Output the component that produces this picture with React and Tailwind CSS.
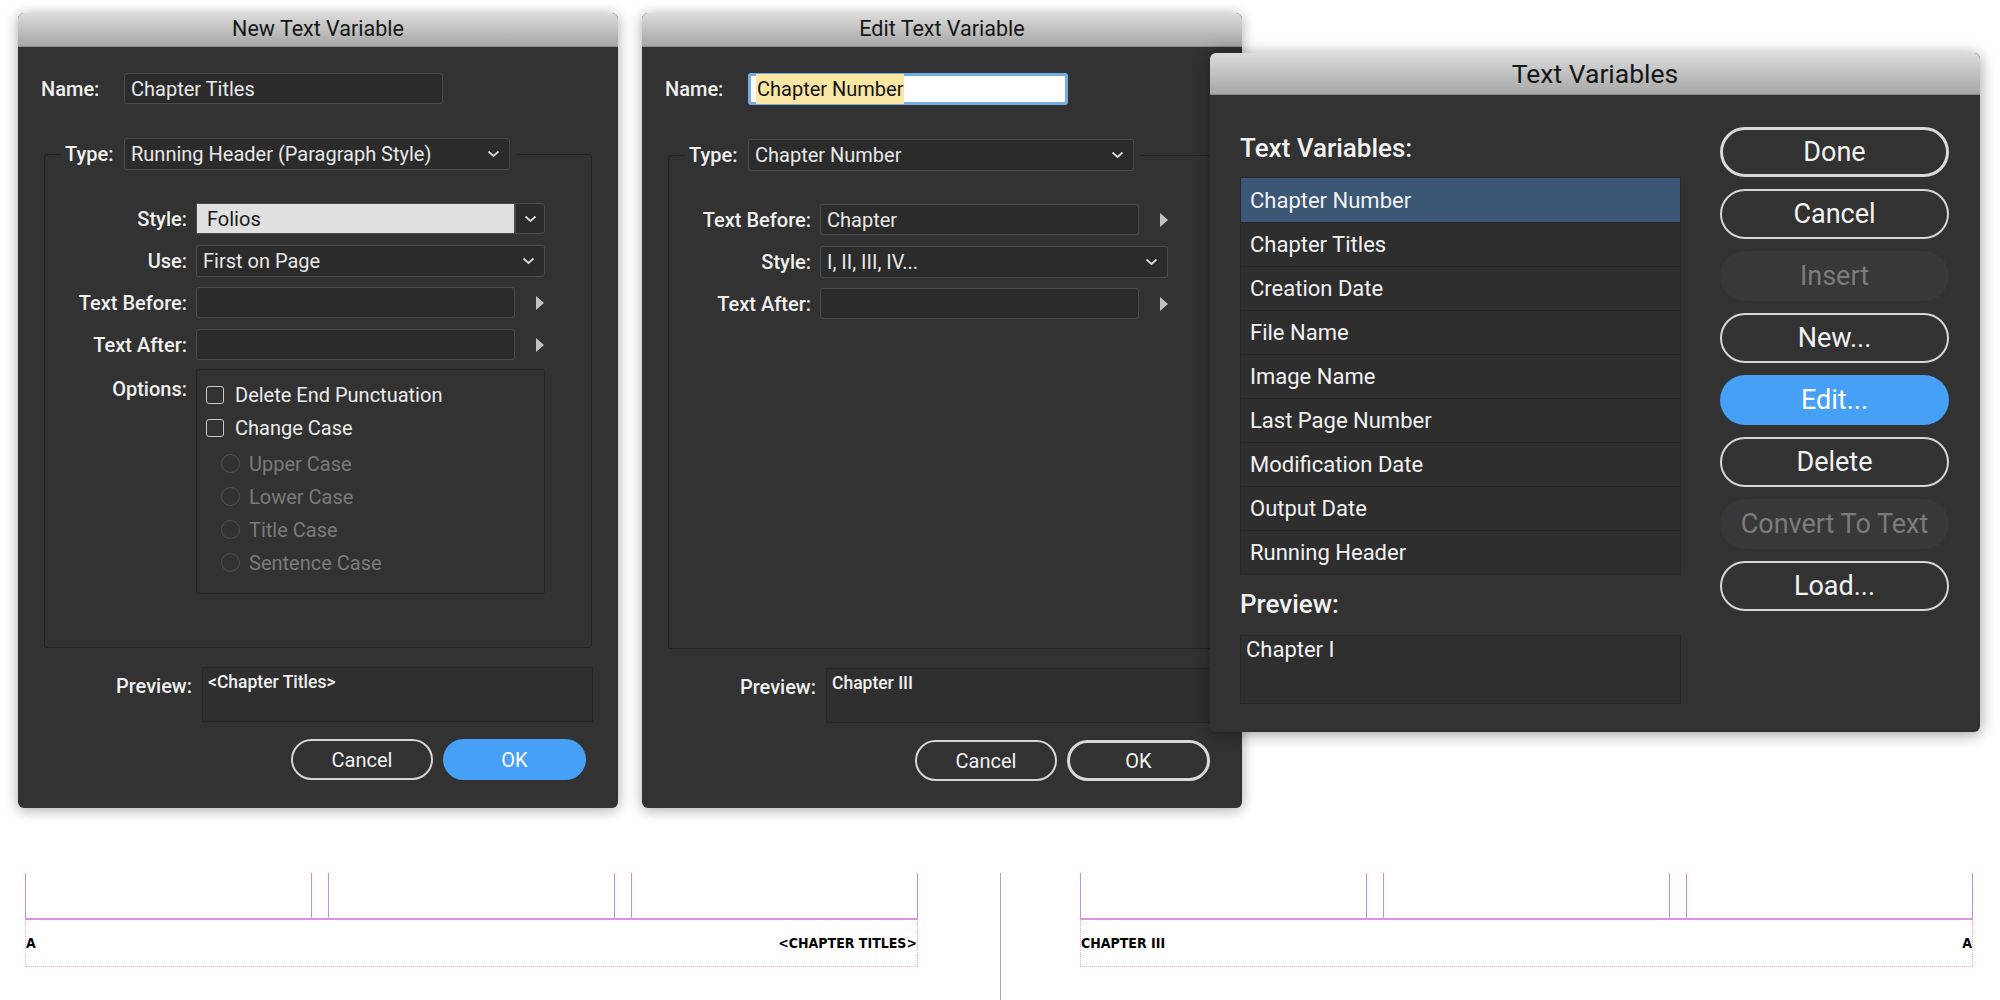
import React from 'react';

const Chevron = ({ className = '' }) => (
  <svg width="13" height="8" viewBox="0 0 13 8" className={className}>
    <polyline points="1.5,1.5 6.5,6 11.5,1.5" fill="none" stroke="currentColor" strokeWidth="1.7" />
  </svg>
);

const Arrow = () => (
  <svg width="8" height="14" viewBox="0 0 8 14" className="ml-[12px]">
    <polygon points="0,0 8,7 0,14" fill="#c2c2c2" />
  </svg>
);

const Field = ({ w, children }) => (
  <div className={`h-[31px] ${w} flex items-center px-[6px] bg-[#2b2b2b] border border-[#4b4b4b] rounded-[3px] text-[20px] text-[#e8e8e8] whitespace-nowrap`}>
    {children}
  </div>
);

const Select = ({ w, children }) => (
  <div className={`h-[32px] ${w} flex items-center justify-between pl-[6px] pr-[9px] bg-[#2b2b2b] border border-[#4b4b4b] rounded-[3px] text-[20px] text-[#e8e8e8] whitespace-nowrap`}>
    <span>{children}</span>
    <Chevron className="text-[#dcdcdc]" />
  </div>
);

const Label = ({ children }) => (
  <div className="w-[142px] text-right text-[20px] font-medium text-[#f0f0f0] whitespace-nowrap">{children}</div>
);

const Row = ({ label, children }) => (
  <div className="flex items-center gap-[9px] h-[31px]">
    <Label>{label}</Label>
    {children}
  </div>
);

const TitleBar = ({ children, big }) => (
  <div
    className={`${big ? 'h-[42px] text-[26.5px]' : 'h-[34px] text-[21.5px]'} flex items-center justify-center bg-linear-to-b from-[#dcdcdc] to-[#a7a7a7] text-[#161616] border-b border-[#8a8a8a]`}
  >
    {children}
  </div>
);

const PillButton = ({ children, variant = 'outline', className = '' }) => {
  const styles = {
    outline: 'border-2 border-[#d6d6d6] text-[#f2f2f2]',
    strong: 'border-[3px] border-[#d9d9d9] text-[#f2f2f2]',
    blue: 'bg-[#46a0f5] text-white',
    disabled: 'bg-[#383838] text-[#7c7c7c]'
  };
  return (
    <div className={`flex items-center justify-center rounded-full ${styles[variant]} ${className}`}>
      {children}
    </div>
  );
};

const Checkbox = ({ label }) => (
  <div className="flex items-center h-[33px] pl-[9px]">
    <div className="w-[18px] h-[18px] border-[1.5px] border-[#c9c9c9] rounded-[3px]" />
    <span className="ml-[11px] text-[20px] text-[#ececec]">{label}</span>
  </div>
);

const Radio = ({ label }) => (
  <div className="flex items-center h-[33px] pl-[24px]">
    <div className="w-[19px] h-[19px] border-[1.5px] border-[#515151] rounded-full" />
    <span className="ml-[9px] text-[20px] text-[#7a7a7a]">{label}</span>
  </div>
);

const VariableDialog = ({ title, left, nameField, typeValue, rows, preview, okStyle }) => (
  <div
    className="absolute top-[13px] w-[600px] h-[795px] bg-[#323232] rounded-[6px] overflow-hidden shadow-[0_2px_14px_rgba(0,0,0,0.35)]"
    style={{ left }}
  >
    <TitleBar>{title}</TitleBar>
    <div className="flex items-center pl-[23px] mt-[26px]">
      <div className="w-[83px] text-[20px] font-medium text-[#f0f0f0]">Name:</div>
      {nameField}
    </div>

    <fieldset className="mt-[34px] ml-[26px] w-[548px] border border-[#242424] rounded-[3px]">
      <legend className="ml-[16px] pl-[4px] pr-[6px]">
        <div className="flex items-center">
          <div className="w-[59px] text-[20px] font-medium text-[#f0f0f0]">Type:</div>
          <Select w="w-[386px]">{typeValue}</Select>
        </div>
      </legend>
      <div className="h-[477px] pt-[33px] flex flex-col gap-[11px]">{rows}</div>
    </fieldset>

    <div className="flex items-start mt-[19px] pl-[26px]">
      <div className="w-[148px] text-right text-[20px] font-medium text-[#f0f0f0] pt-[4px]">Preview:</div>
      <div className="ml-[10px] w-[391px] h-[55px] border border-[#262626] bg-[#2f2f2f] px-[5px] pt-[1px] text-[17.5px] font-medium text-[#f0f0f0]">
        {preview}
      </div>
    </div>

    <div className="flex justify-end gap-[10px] pr-[32px] mt-[17px]">
      <PillButton className="w-[142px] h-[41px] text-[20px]">Cancel</PillButton>
      <PillButton variant={okStyle} className="w-[143px] h-[41px] text-[20px]">OK</PillButton>
    </div>
  </div>
);

const variables = [
  'Chapter Number',
  'Chapter Titles',
  'Creation Date',
  'File Name',
  'Image Name',
  'Last Page Number',
  'Modification Date',
  'Output Date',
  'Running Header'
];

const PageGuides = ({ leftText, rightText }) => (
  <div className="w-[893px] flex flex-col">
    <div className="flex h-[45px]">
      <div className="w-[287px] border-x border-[#c98af0]" />
      <div className="w-[16px]" />
      <div className="w-[287px] border-x border-[#c98af0]" />
      <div className="w-[16px]" />
      <div className="w-[287px] border-x border-[#c98af0]" />
    </div>
    <div className="h-[2px] bg-[#e08ee8]" />
    <div className="h-[47px] border-x border-b border-dotted border-[#f4a9c9] flex items-center justify-between font-['DejaVu_Sans_Condensed',sans-serif] font-bold text-[14px] text-black">
      <span>{leftText}</span>
      <span>{rightText}</span>
    </div>
  </div>
);

export default function App() {
  return (
    <div className="relative w-[2000px] h-[1000px] bg-white overflow-hidden font-['Roboto',sans-serif]">
      <VariableDialog
        title="New Text Variable"
        left={18}
        okStyle="blue"
        typeValue="Running Header (Paragraph Style)"
        preview="<Chapter Titles>"
        nameField={<Field w="w-[319px]">Chapter Titles</Field>}
        rows={
          <>
            <Row label="Style:">
              <div className="flex h-[31px]">
                <div className="w-[319px] h-[31px] bg-[#e0e0e0] border border-[#4b4b4b] flex items-center pl-[10px] text-[20px] text-[#1a1a1a]">
                  Folios
                </div>
                <div className="w-[30px] h-[31px] border border-[#4b4b4b] rounded-r-[3px] bg-[#2b2b2b] flex items-center justify-center">
                  <Chevron className="text-[#dcdcdc]" />
                </div>
              </div>
            </Row>
            <Row label="Use:">
              <Select w="w-[349px]">First on Page</Select>
            </Row>
            <Row label="Text Before:">
              <Field w="w-[319px]" />
              <Arrow />
            </Row>
            <Row label="Text After:">
              <Field w="w-[319px]" />
              <Arrow />
            </Row>
            <div className="flex items-start gap-[9px] -mt-[2px]">
              <div className="pt-[5px]">
                <Label>Options:</Label>
              </div>
              <div className="w-[349px] h-[225px] border border-[#272727] rounded-[2px] pt-[8px]">
                <Checkbox label="Delete End Punctuation" />
                <Checkbox label="Change Case" />
                <div className="mt-[3px]">
                  <Radio label="Upper Case" />
                  <Radio label="Lower Case" />
                  <Radio label="Title Case" />
                  <Radio label="Sentence Case" />
                </div>
              </div>
            </div>
          </>
        }
      />

      <VariableDialog
        title="Edit Text Variable"
        left={642}
        okStyle="strong"
        typeValue="Chapter Number"
        preview="Chapter III"
        nameField={
          <div className="w-[320px] h-[32px] flex items-center pl-[5px] bg-white border-[3px] border-[#76ace6] rounded-[3px] text-[20px] text-[#141414]">
            <span className="bg-[#fbe7a4] px-[1px]">Chapter Number</span>
          </div>
        }
        rows={
          <>
            <Row label="Text Before:">
              <Field w="w-[319px]">Chapter</Field>
              <Arrow />
            </Row>
            <Row label="Style:">
              <Select w="w-[348px]">I, II, III, IV...</Select>
            </Row>
            <Row label="Text After:">
              <Field w="w-[319px]" />
              <Arrow />
            </Row>
          </>
        }
      />

      {/* Text Variables panel, on top of the edit dialog */}
      <div className="absolute left-[1210px] top-[53px] w-[770px] h-[679px] bg-[#323232] rounded-[6px] overflow-hidden shadow-[0_2px_16px_rgba(0,0,0,0.4)]">
        <TitleBar big>Text Variables</TitleBar>
        <div className="flex pl-[30px]">
          <div className="w-[441px]">
            <div className="mt-[38px] h-[30px] leading-[30px] text-[26px] font-medium text-[#f2f2f2]">Text Variables:</div>
            <div className="mt-[14px] border border-[#282828] bg-[#2e2e2e]">
              {variables.map((name, i) => (
                <div
                  key={name}
                  className={`h-[44px] flex items-center pl-[9px] text-[22px] text-[#f2f2f2] ${i === 0 ? 'bg-[#3b5775]' : 'border-t border-[#262626]'}`}
                >
                  {name}
                </div>
              ))}
            </div>
            <div className="mt-[14px] h-[30px] leading-[30px] text-[26px] font-medium text-[#f2f2f2]">Preview:</div>
            <div className="mt-[16px] h-[69px] border border-[#272727] bg-[#2f2f2f] pl-[5px] leading-[26px] pt-[1px] text-[22px] text-[#f2f2f2]">
              Chapter I
            </div>
          </div>
          <div className="ml-[39px] w-[229px] pt-[32px] flex flex-col gap-[12px]">
            <PillButton variant="strong" className="h-[50px] text-[27px]">Done</PillButton>
            <PillButton className="h-[50px] text-[27px]">Cancel</PillButton>
            <PillButton variant="disabled" className="h-[50px] text-[27px]">Insert</PillButton>
            <PillButton className="h-[50px] text-[27px]">New...</PillButton>
            <PillButton variant="blue" className="h-[50px] text-[27px]">Edit...</PillButton>
            <PillButton className="h-[50px] text-[27px]">Delete</PillButton>
            <PillButton variant="disabled" className="h-[50px] text-[27px]">Convert To Text</PillButton>
            <PillButton className="h-[50px] text-[27px]">Load...</PillButton>
          </div>
        </div>
      </div>

      {/* Page spread guides */}
      <div className="absolute left-0 top-[873px] w-[2000px] h-[127px] flex">
        <div className="ml-[25px]">
          <PageGuides leftText="A" rightText={'<CHAPTER TITLES>'} />
        </div>
        <div className="ml-[82px] w-[1px] h-[127px] bg-[#a8a8a8]" />
        <div className="ml-[79px]">
          <PageGuides leftText="CHAPTER III" rightText="A" />
        </div>
      </div>
    </div>
  );
}
